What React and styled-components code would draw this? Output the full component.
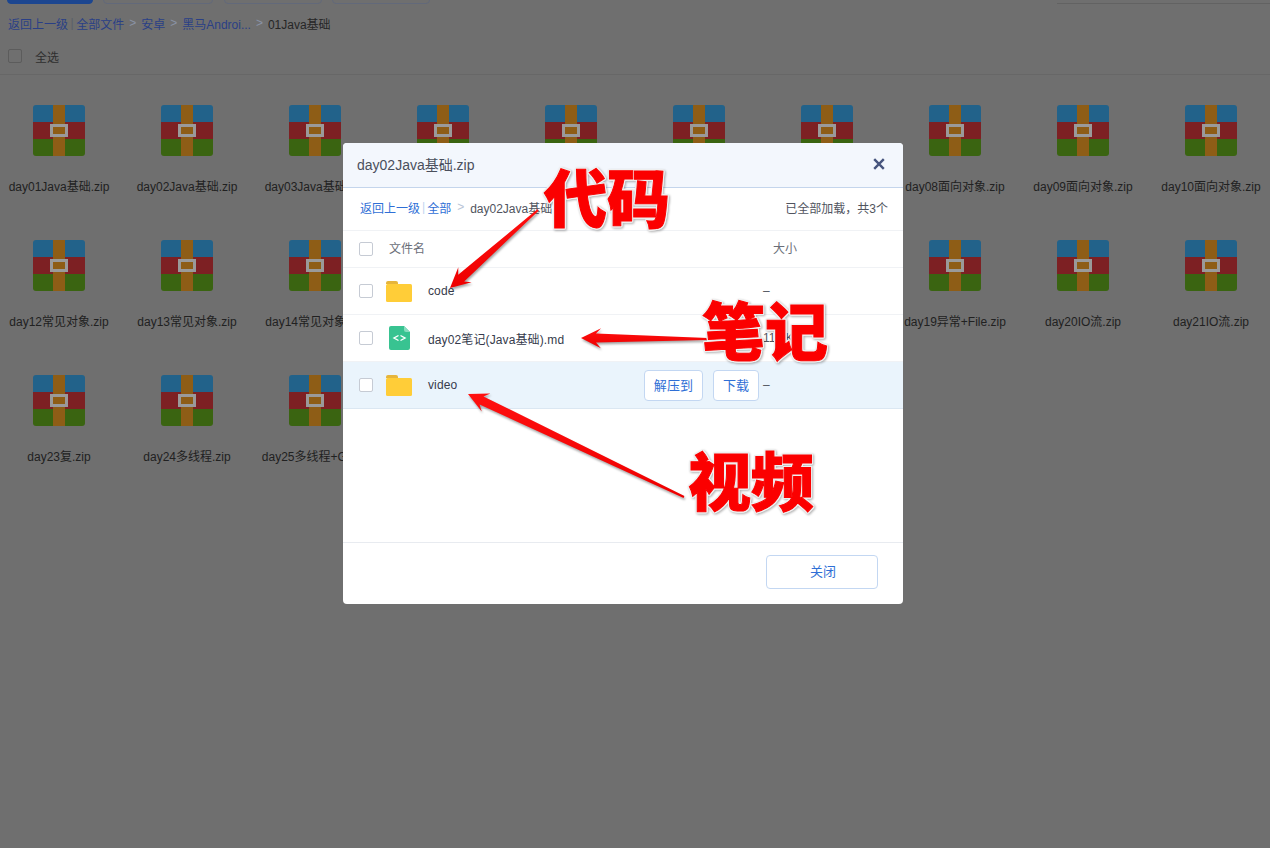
import React from 'react';
import styled, {createGlobalStyle} from "styled-components";

const FONT = `"Liberation Sans", "Noto Sans CJK SC", sans-serif`

const GlobalStyle = createGlobalStyle`
    html, body {
        margin: 0;
        padding: 0;
        background: #6f6f6f;
    }
    body {
        font-family: ${FONT};
        font-size: 12px;
    }
    * {
        box-sizing: border-box;
    }
`

const Page = styled.div`
    position: relative;
    width: 1270px;
    height: 848px;
    overflow: hidden;
    background: #6f6f6f;
`

const Toolbar = styled.div`
    display: flex;
    height: 4px;
    padding-left: 7px;
    align-items: flex-end;
    overflow: hidden;
`

const ToolButton = styled.div`
    flex: none;
    width: ${p => p.width}px;
    height: 32px;
    margin-right: ${p => p.gap}px;
    border-radius: 4px;
    background: ${p => p.primary ? '#1c4690' : 'transparent'};
    border: 1px solid ${p => p.primary ? '#1c4690' : '#62697a'};
`

const SearchLine = styled.div`
    flex: none;
    width: 213px;
    height: 1px;
    margin-left: auto;
    background: #626262;
`

const Crumbs = styled.div`
    display: flex;
    align-items: center;
    height: 16px;
    margin-top: 11px;
    padding-left: 8px;
    color: #2a3f86;
`

const CrumbSep = styled.span`
    margin: 0 ${p => p.bar ? 2.5 : 5}px;
    color: ${p => p.bar ? '#5a5f68' : '#8a93a6'};
`

const CrumbCurrent = styled.span`
    color: #262626;
`

const SelectRow = styled.div`
    display: flex;
    align-items: center;
    height: 44px;
    padding: 7px 0 0 8px;
    border-bottom: 1px solid #676767;
    color: #2e2e2e;
`

const DimCheck = styled.span`
    width: 14px;
    height: 14px;
    margin-right: 13px;
    border: 1px solid #5c5c5c;
    border-radius: 2px;
`

const FileGrid = styled.div`
    display: grid;
    grid-template-columns: repeat(10, 118px);
    column-gap: 10px;
    grid-auto-rows: 135px;
    padding-top: 30px;
`

const FileCell = styled.div`
    display: flex;
    flex-direction: column;
    align-items: center;
    white-space: nowrap;
`

const FileName = styled.div`
    margin-top: 23px;
    line-height: 16px;
    color: #212121;
`

const Modal = styled.div`
    position: absolute;
    left: 343px;
    top: 143px;
    display: flex;
    flex-direction: column;
    width: 560px;
    height: 461px;
    border-radius: 4px;
    background: #fff;
    overflow: hidden;
`

const ModalHeader = styled.div`
    display: flex;
    align-items: center;
    justify-content: space-between;
    flex: none;
    height: 45px;
    padding: 0 18px 2px 14px;
    background: #f3f7fd;
    border-bottom: 1px solid #c4d5ec;
    font-size: 14px;
    color: #4a4f5c;
`

const ModalCrumbs = styled.div`
    display: flex;
    align-items: center;
    flex: none;
    height: 43px;
    padding: 0 15px 4px 17px;
    border-bottom: 1px solid #f0f2f5;
    color: #2f6fd6;
`

const ModalCrumbSep = styled.span`
    margin: 0 ${p => p.bar ? 2 : 6}px;
    color: ${p => p.bar ? '#c3d5ef' : '#b8c4d6'};
`

const ModalCrumbCurrent = styled.span`
    color: #50545e;
`

const LoadedNote = styled.span`
    margin-left: auto;
    color: #50545e;
`

const TableHead = styled.div`
    display: flex;
    align-items: center;
    flex: none;
    height: 37px;
    padding-left: 16px;
    border-bottom: 1px solid #f0f2f5;
    color: #6a6e78;
`

const HeadName = styled.span`
    margin: 0 0 3px 16px;
    width: 384px;
`

const HeadSize = styled.span`
    margin-bottom: 3px;
`

const Row = styled.div`
    display: flex;
    align-items: center;
    flex: none;
    height: 47px;
    padding-left: 16px;
    border-bottom: 1px solid ${p => p.active ? '#dbe7f2' : '#f0f2f5'};
    background: ${p => p.active ? '#eaf4fc' : '#fff'};
    color: #363b4c;
    letter-spacing: 0.12px;
`

const Check = styled.span`
    flex: none;
    width: 14px;
    height: 14px;
    border: 1px solid #c6cbd4;
    border-radius: 2px;
    background: #fff;
`

const IconSlot = styled.span`
    display: flex;
    align-items: center;
    justify-content: center;
    flex: none;
    width: 26px;
    margin-left: 13px;
`

const RowName = styled.span`
    margin-left: 16px;
    flex: 1;
`

const RowButton = styled.span`
    display: flex;
    align-items: center;
    justify-content: center;
    flex: none;
    width: ${p => p.width}px;
    height: 31px;
    margin-right: ${p => p.gap}px;
    padding-bottom: 2px;
    border: 1px solid #c3d7f2;
    border-radius: 4px;
    background: #fff;
    font-size: 13px;
    color: #2f6fd6;
`

const RowSize = styled.span`
    flex: none;
    width: 140px;
    color: #50545e;
    letter-spacing: 0;
`

const ModalBody = styled.div`
    flex: 1;
`

const ModalFooter = styled.div`
    display: flex;
    justify-content: flex-end;
    flex: none;
    height: 62px;
    padding: 12px 25px 0 0;
    border-top: 1px solid #e8ebf0;
`

const CloseButton = styled.div`
    display: flex;
    align-items: center;
    justify-content: center;
    width: 112px;
    height: 34px;
    padding: 0 0 3px 2px;
    border: 1px solid #c3d7f2;
    border-radius: 4px;
    font-size: 13px;
    color: #2f6fd6;
`

const ArrowLayer = styled.svg`
    position: absolute;
    left: 0;
    top: 0;
    filter: drop-shadow(1px 2px 1px rgba(0, 0, 0, 0.35));
`

const Callout = styled.div`
    position: absolute;
    left: ${p => p.x}px;
    top: ${p => p.y}px;
    font-family: "Noto Sans CJK SC", sans-serif;
    font-size: 63px;
    font-weight: 900;
    line-height: 70px;
    white-space: nowrap;
    color: #fb0000;
    -webkit-text-stroke: 1px #fb0000;
    filter: drop-shadow(1px 0 0 #efefef) drop-shadow(-1px 0 0 #efefef) drop-shadow(0 1px 0 #efefef) drop-shadow(0 -1px 0 #efefef) drop-shadow(1px 1px 1px rgba(0, 0, 0, 0.3));
`

const ZipIcon = () => (
    <svg width="52" height="51" viewBox="0 0 52 51">
        <defs>
            <clipPath id="zipClip"><rect width="52" height="51" rx="3"/></clipPath>
        </defs>
        <g clipPath="url(#zipClip)">
            <rect width="52" height="17" fill="#22628a"/>
            <rect y="17" width="52" height="17" fill="#7d2023"/>
            <rect y="34" width="52" height="17" fill="#3a6411"/>
            <rect x="20" width="12" height="51" fill="#8e5d16"/>
            <rect x="17" y="19" width="18" height="13" fill="#9a9a9a"/>
            <rect x="20" y="22" width="12" height="7" fill="#8e5d16"/>
        </g>
    </svg>
)

const FolderIcon = () => (
    <svg width="26" height="21" viewBox="0 0 26 21">
        <path d="M2 0h8a2 2 0 0 1 2 2v1H0V2a2 2 0 0 1 2-2z" fill="#e6b53c"/>
        <rect y="3" width="26" height="18" rx="1.5" fill="#ffcd38"/>
    </svg>
)

const MarkdownIcon = () => (
    <svg width="21" height="24" viewBox="0 0 21 24">
        <path d="M2 0h13l6 6v16a2 2 0 0 1-2 2H2a2 2 0 0 1-2-2V2a2 2 0 0 1 2-2z" fill="#38c391"/>
        <path d="M15 0l6 6h-4a2 2 0 0 1-2-2z" fill="#8adcbf"/>
        <path d="M9.5 9.5L5 12l4.5 2.5M11.5 9.5L16 12l-4.5 2.5" fill="none" stroke="#fff" strokeWidth="1.4"/>
    </svg>
)

const CloseIcon = () => (
    <svg width="12" height="12" viewBox="0 0 12 12">
        <path d="M1.2 1.2l9.6 9.6M10.8 1.2l-9.6 9.6" stroke="#47557e" strokeWidth="2.4" fill="none"/>
    </svg>
)

// tapered arrow, thin at the tail and a barbed head at the tip
const arrowPoints = ([tx, ty], [hx, hy]) => {
    const len = Math.hypot(hx - tx, hy - ty)
    const ux = (hx - tx) / len
    const uy = (hy - ty) / len
    const nx = -uy
    const ny = ux
    const at = (along, side) => `${(hx - ux * along + nx * side).toFixed(1)},${(hy - uy * along + ny * side).toFixed(1)}`
    return [
        `${tx - nx},${ty - ny}`,
        at(15, -4.5),
        at(20, -10),
        at(0, 0),
        at(20, 10),
        at(15, 4.5),
        `${tx + nx},${ty + ny}`,
    ].join(' ')
}

const arrows = [
    {from: [538, 210], to: [450, 288]},
    {from: [708, 339], to: [581, 338]},
    {from: [684, 497], to: [468, 394]},
]

const row1 = ['day01Java基础.zip', 'day02Java基础.zip', 'day03Java基础.zip', 'day04Java基础.zip', 'day05面向对象.zip', 'day06面向对象.zip', 'day07面向对象.zip', 'day08面向对象.zip', 'day09面向对象.zip', 'day10面向对象.zip']
const row2 = ['day12常见对象.zip', 'day13常见对象.zip', 'day14常见对象.zip', 'day15集合.zip', 'day16集合.zip', 'day17集合.zip', 'day18集合.zip', 'day19异常+File.zip', 'day20IO流.zip', 'day21IO流.zip']
const row3 = ['day23复.zip', 'day24多线程.zip', 'day25多线程+Gi.zip']
const files = [...row1, ...row2, ...row3]

const App = () => {
    return (
        <Page>
            <GlobalStyle/>
            <Toolbar>
                <ToolButton primary width={86} gap={10}/>
                <ToolButton width={110} gap={11}/>
                <ToolButton width={98} gap={10}/>
                <ToolButton width={98} gap={0}/>
                <SearchLine/>
            </Toolbar>
            <Crumbs>
                返回上一级<CrumbSep bar>|</CrumbSep>全部文件<CrumbSep>&gt;</CrumbSep>安卓<CrumbSep>&gt;</CrumbSep>黑马Androi...<CrumbSep>&gt;</CrumbSep><CrumbCurrent>01Java基础</CrumbCurrent>
            </Crumbs>
            <SelectRow>
                <DimCheck/>全选
            </SelectRow>
            <FileGrid>
                {files.map(name => (
                    <FileCell key={name}>
                        <ZipIcon/>
                        <FileName>{name}</FileName>
                    </FileCell>
                ))}
            </FileGrid>
            <Modal>
                <ModalHeader>
                    day02Java基础.zip
                    <CloseIcon/>
                </ModalHeader>
                <ModalCrumbs>
                    返回上一级<ModalCrumbSep bar>|</ModalCrumbSep>全部<ModalCrumbSep>&gt;</ModalCrumbSep><ModalCrumbCurrent>day02Java基础</ModalCrumbCurrent>
                    <LoadedNote>已全部加载，共3个</LoadedNote>
                </ModalCrumbs>
                <TableHead>
                    <Check/>
                    <HeadName>文件名</HeadName>
                    <HeadSize>大小</HeadSize>
                </TableHead>
                <Row>
                    <Check/>
                    <IconSlot><FolderIcon/></IconSlot>
                    <RowName>code</RowName>
                    <RowSize>–</RowSize>
                </Row>
                <Row>
                    <Check/>
                    <IconSlot><MarkdownIcon/></IconSlot>
                    <RowName>day02笔记(Java基础).md</RowName>
                    <RowSize>11.3KB</RowSize>
                </Row>
                <Row active>
                    <Check/>
                    <IconSlot><FolderIcon/></IconSlot>
                    <RowName>video</RowName>
                    <RowButton width={59} gap={10}>解压到</RowButton>
                    <RowButton width={46} gap={4}>下载</RowButton>
                    <RowSize>–</RowSize>
                </Row>
                <ModalBody/>
                <ModalFooter>
                    <CloseButton>关闭</CloseButton>
                </ModalFooter>
            </Modal>
            <ArrowLayer width="1270" height="848">
                <defs>
                    <linearGradient id="arrowRed" x1="0" y1="0" x2="0" y2="1">
                        <stop offset="0" stopColor="#ff1010"/>
                        <stop offset="1" stopColor="#ee0000"/>
                    </linearGradient>
                </defs>
                {arrows.map(a => (
                    <polygon key={a.from.join()} points={arrowPoints(a.from, a.to)} fill="url(#arrowRed)"/>
                ))}
            </ArrowLayer>
            <Callout x={544} y={160}>代码</Callout>
            <Callout x={702} y={293}>笔记</Callout>
            <Callout x={688} y={443}>视频</Callout>
        </Page>
    )
}

export default App
